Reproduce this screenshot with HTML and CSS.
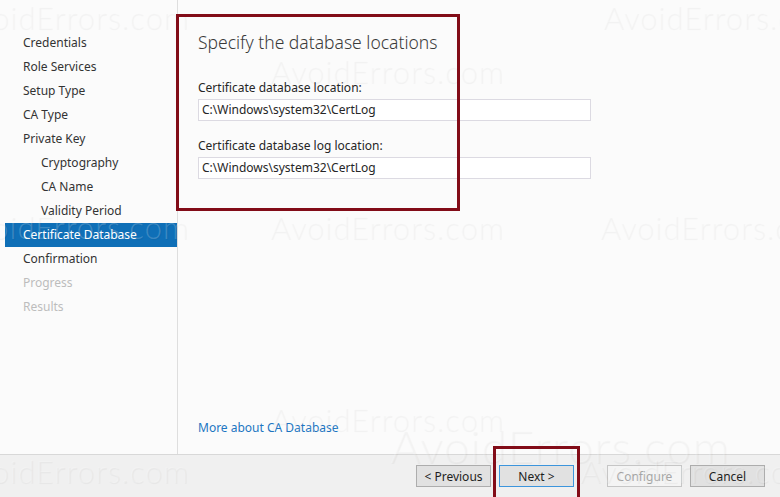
FILE: index.html
```html
<!DOCTYPE html>
<html lang="en">

<head>
  <meta charset="UTF-8">
  <title>Add Roles and Features - Certificate Database</title>
  <link rel="stylesheet" href="styles.css">
</head>

<body>
  <div class="wizard">
    <div class="main">
      <ul class="steps">
        <li>Credentials</li>
        <li>Role Services</li>
        <li>Setup Type</li>
        <li>CA Type</li>
        <li>Private Key</li>
        <li class="sub">Cryptography</li>
        <li class="sub">CA Name</li>
        <li class="sub">Validity Period</li>
        <li class="active">Certificate Database</li>
        <li>Confirmation</li>
        <li class="disabled">Progress</li>
        <li class="disabled">Results</li>
      </ul>

      <div class="content">
        <h1>Specify the database locations</h1>

        <label class="field-label">Certificate database location:</label>
        <div class="field">C:\Windows\system32\CertLog</div>

        <label class="field-label">Certificate database log location:</label>
        <div class="field">C:\Windows\system32\CertLog</div>

        <a class="more-link" href="#">More about CA Database</a>
      </div>
    </div>

    <div class="footer">
      <button class="btn">&lt; Previous</button>
      <button class="btn btn-focus">Next &gt;</button>
      <button class="btn btn-disabled">Configure</button>
      <button class="btn">Cancel</button>
    </div>

    <!-- watermark layer -->
    <div class="watermarks">
      <span class="wm" style="left:-45px; top:-2px">AvoidErrors.com</span>
      <span class="wm" style="left:603px; top:-2px">AvoidErrors.com</span>
      <span class="wm" style="left:270px; top:52px">AvoidErrors.com</span>
      <span class="wm" style="left:-45px; top:208px">AvoidErrors.com</span>
      <span class="wm" style="left:270px; top:208px">AvoidErrors.com</span>
      <span class="wm" style="left:600px; top:208px">AvoidErrors.com</span>
      <span class="wm" style="left:270px; top:400px">AvoidErrors.com</span>
      <span class="wm wm-big" style="left:390px; top:418px">AvoidErrors.com</span>
      <span class="wm" style="left:-45px; top:452px">AvoidErrors.com</span>
      <span class="wm" style="left:580px; top:452px">AvoidErrors.com</span>
    </div>

    <!-- highlight boxes -->
    <div class="mark mark-content"></div>
    <div class="mark mark-next"></div>
  </div>
</body>

</html>
```

FILE: styles.css
```css
* {
  margin: 0;
  padding: 0;
  box-sizing: border-box;
}

body {
  font-family: 'Noto Sans', 'Open Sans', sans-serif;
  font-size: 12px;
  color: #262626;
  background: #fbfbfb;
  overflow: hidden;
}

.wizard {
  position: relative;
  width: 780px;
  height: 497px;
  display: flex;
  flex-direction: column;
  overflow: hidden;
}

.main {
  display: flex;
  height: 455px;
  background: #fbfbfb;
  border-bottom: 1px solid #d8d8d8;
}

/* left step list */
.steps {
  list-style: none;
  width: 178px;
  padding: 31px 0 0 5px;
  border-right: 1px solid #dedede;
}

.steps li {
  height: 24px;
  line-height: 23px;
  padding-left: 18px;
  color: #333333;
  white-space: nowrap;
}

.steps li.sub {
  padding-left: 36px;
}

.steps li.active {
  background: #0f6fb7;
  color: #ffffff;
}

.steps li.disabled {
  color: #bdbdbd;
}

/* right content */
.content {
  flex: 1;
  padding: 30px 0 0 20px;
  display: flex;
  flex-direction: column;
  align-items: flex-start;
}

.content h1 {
  font-size: 17.5px;
  font-weight: 300;
  color: #3a3a3a;
  line-height: 24px;
  margin-bottom: 26px;
}

.field-label {
  display: block;
  line-height: 16px;
  margin-bottom: 3px;
}

.field {
  width: 393px;
  height: 22px;
  line-height: 20px;
  padding-left: 3px;
  border: 1px solid #dcdae2;
  background: #ffffff;
  margin-bottom: 17px;
}

.more-link {
  margin-top: auto;
  margin-bottom: 18px;
  color: #1c76c2;
  text-decoration: none;
}

/* bottom buttons */
.footer {
  flex: 1;
  background: #f0f0f0;
  display: flex;
  justify-content: flex-end;
  align-items: flex-start;
  padding: 10px 15px 0 0;
  gap: 8px;
}

.btn {
  width: 75px;
  height: 22px;
  font-family: inherit;
  font-size: 12px;
  color: #1e1e1e;
  background: #e1e1e1;
  border: 1px solid #adadad;
}

.btn-focus {
  border-color: #3d95dc;
}

.btn-disabled {
  margin-left: 25px;
  color: #a6a6a6;
  background: #f4f4f4;
  border-color: #c6c6c6;
}

/* watermark */
.watermarks {
  position: absolute;
  inset: 0;
  pointer-events: none;
}

.wm {
  position: absolute;
  font-family: 'Lato', sans-serif;
  font-weight: 300;
  font-size: 31px;
  letter-spacing: 1px;
  white-space: nowrap;
  color: rgba(255, 255, 255, 0.2);
  text-shadow: 1px 1px 1px rgba(0, 0, 0, 0.045);
}

.wm-big {
  font-size: 46px;
}

/* red annotation boxes */
.mark {
  position: absolute;
  border: 3px solid #820c18;
}

.mark-content {
  left: 176px;
  top: 14px;
  width: 284px;
  height: 197px;
}

.mark-next {
  left: 493px;
  top: 446px;
  width: 87px;
  height: 60px;
}
```
